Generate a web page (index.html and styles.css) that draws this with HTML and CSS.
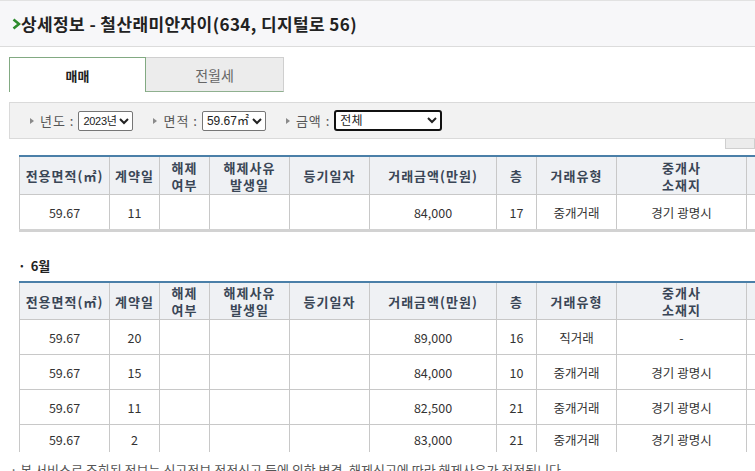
FILE: index.html
```
<!DOCTYPE html>
<html>

<head>
  <meta charset="utf-8">
  <meta name="viewport" content="width=device-width">
  <title>상세정보</title>
  <link rel="stylesheet" href="styles.css">
</head>

<body>
  <div class="title-bar">
    <h2><svg class="chev" width="9" height="12" viewBox="0 0 9 12"><polyline points="1.5,1.5 7,6 1.5,10.5" fill="none" stroke="#2e8b2e" stroke-width="2.6"/></svg>상세정보 - 철산래미안자이(634, 디지털로 56)</h2>
  </div>

  <div class="content">
    <div class="tabs">
      <div class="tab on">매매</div>
      <div class="tab">전월세</div>
    </div>

    <div class="filter">
      <div class="field">
        <span class="arrow"></span><span class="label">년도 :</span>
        <select class="sel sel-year"><option>2023년</option></select>
      </div>
      <div class="field">
        <span class="arrow"></span><span class="label">면적 :</span>
        <select class="sel sel-area"><option>59.67㎡</option></select>
      </div>
      <div class="field">
        <span class="arrow"></span><span class="label">금액 :</span>
        <select class="sel sel-price focused"><option>전체</option></select>
      </div>
    </div>
    <div class="tool-row"><span class="tool-btn"></span></div>

    <table class="deal">
      <colgroup>
        <col style="width:90px"><col style="width:50px"><col style="width:50px"><col style="width:80px"><col style="width:80px">
        <col style="width:127px"><col style="width:40px"><col style="width:80px"><col style="width:130px"><col style="width:60px">
      </colgroup>
      <thead>
        <tr><th>전용면적(㎡)</th><th>계약일</th><th>해제<br>여부</th><th>해제사유<br>발생일</th><th>등기일자</th><th>거래금액(만원)</th><th>층</th><th>거래유형</th><th>중개사<br>소재지</th><th></th></tr>
      </thead>
      <tbody>
        <tr><td>59.67</td><td>11</td><td></td><td></td><td></td><td>84,000</td><td>17</td><td>중개거래</td><td>경기 광명시</td><td></td></tr>
      </tbody>
    </table>

    <h3 class="month">6월</h3>
    <table class="deal">
      <colgroup>
        <col style="width:90px"><col style="width:50px"><col style="width:50px"><col style="width:80px"><col style="width:80px">
        <col style="width:127px"><col style="width:40px"><col style="width:80px"><col style="width:130px"><col style="width:60px">
      </colgroup>
      <thead>
        <tr><th>전용면적(㎡)</th><th>계약일</th><th>해제<br>여부</th><th>해제사유<br>발생일</th><th>등기일자</th><th>거래금액(만원)</th><th>층</th><th>거래유형</th><th>중개사<br>소재지</th><th></th></tr>
      </thead>
      <tbody>
        <tr><td>59.67</td><td>20</td><td></td><td></td><td></td><td>89,000</td><td>16</td><td>직거래</td><td>-</td><td></td></tr>
        <tr><td>59.67</td><td>15</td><td></td><td></td><td></td><td>84,000</td><td>10</td><td>중개거래</td><td>경기 광명시</td><td></td></tr>
        <tr><td>59.67</td><td>11</td><td></td><td></td><td></td><td>82,500</td><td>21</td><td>중개거래</td><td>경기 광명시</td><td></td></tr>
        <tr class="cut"><td>59.67</td><td>2</td><td></td><td></td><td></td><td>83,000</td><td>21</td><td>중개거래</td><td>경기 광명시</td><td></td></tr>
      </tbody>
    </table>

    <p class="note">· 본 서비스로 조회된 정보는 신고정보 정정신고 등에 의한 변경, 해제신고에 따라 해제사유가 정정됩니다.</p>
  </div>
</body>

</html>
```

FILE: styles.css
```
html {
	overflow: hidden;
}

body {
	margin: 0;
	background-color: white;
	color: #333;
	font-family: "Noto Sans CJK KR", "Liberation Sans", sans-serif;
	font-size: 13px;
}

.title-bar {
	background-color: #f7f7f9;
	border-top: 1px solid #e2e2e2;
	border-bottom: 1px solid #dcdcdc;
	box-sizing: border-box;
	height: 47px;
	display: flex;
	align-items: center;
	padding-left: 12px;
}

.title-bar h2 {
	margin: 0;
	font-size: 17px;
	font-weight: bold;
	color: #222;
	line-height: 22px;
	display: flex;
	align-items: center;
	letter-spacing: 0.4px;
}

.content {
	padding-left: 9px;
	width: 800px;
}

.tabs {
	display: flex;
	margin-top: 10px;
	height: 35px;
}

.tab {
	width: 138px;
	box-sizing: border-box;
	display: flex;
	align-items: center;
	justify-content: center;
	font-size: 14px;
	color: #666;
	background-color: #ececec;
	border: 1px solid #cfcfcf;
	border-bottom: 1px solid #8fb08f;
	border-left: none;
}

.tab.on {
	background-color: white;
	color: #222;
	font-weight: bold;
	font-size: 13px;
	border: 1px solid #82aa82;
	border-bottom: none;
	width: 137px;
}

.filter {
	margin-top: 10px;
	height: 37px;
	box-sizing: border-box;
	width: 780px;
	background-color: #f2f2f2;
	border: 1px solid #dadada;
	display: flex;
	align-items: center;
	padding-left: 20px;
	gap: 20px;
}

.field {
	display: flex;
	align-items: center;
}

.arrow {
	width: 0;
	height: 0;
	border-top: 3.5px solid transparent;
	border-bottom: 3.5px solid transparent;
	border-left: 4px solid #8a8a8a;
	margin-right: 6px;
}

.label {
	color: #555;
	font-size: 13px;
	margin-right: 4px;
	letter-spacing: 1px;
}

.sel {
	height: 20px;
	font-family: "Liberation Sans", "Noto Sans CJK KR", sans-serif;
	font-size: 12px;
	color: #222;
	background-color: white;
	border: 1px solid #767676;
	border-radius: 2px;
	padding: 0;
}

.sel-year {
	width: 55px;
	font-size: 11px;
	letter-spacing: -0.3px;
}

.sel-area {
	width: 64px;
}

.sel-price {
	width: 108px;
}

.sel.focused {
	border: 2px solid #111;
	border-radius: 3px;
	height: 21px;
}

.tool-row {
	width: 746px;
	height: 10px;
	display: flex;
	justify-content: flex-end;
}

.tool-btn {
	width: 30px;
	height: 10px;
	box-sizing: border-box;
	background-color: #ececec;
	border: 1px solid #cfcfcf;
	border-top: none;
}

.deal {
	margin-left: 10px;
	margin-top: 6px;
	border-collapse: collapse;
	table-layout: fixed;
	width: 787px;
	border-top: 2px solid #4a7fa8;
	border-bottom: 3px solid #d2d2d2;
}

.deal th {
	height: 37px;
	padding: 0;
	background-color: #eff1f4;
	color: #3a4656;
	font-size: 13px;
	font-weight: bold;
	line-height: 17px;
	letter-spacing: 1px;
	border: 1px solid #c8c8c8;
	border-top: none;
}

.deal td {
	height: 34px;
	padding: 0;
	text-align: center;
	font-size: 12.5px;
	color: #333;
	border: 1px solid #c8c8c8;
}

.deal tr.cut td {
	height: 22px;
	vertical-align: top;
	padding-top: 5px;
	border-bottom: none;
}

.month {
	margin: 25px 0 0 9px;
	font-size: 13px;
	font-weight: bold;
	color: #222;
	line-height: 18px;
	height: 18px;
}

.month::before {
	content: "·";
	margin-right: 5px;
}

.month + .deal {
	margin-top: 6px;
	border-bottom: none;
}

.month + .deal th {
	height: 36px;
}

.note {
	margin: 9px 0 0 1px;
	color: #555;
	font-size: 13px;
	line-height: 18px;
}
```
